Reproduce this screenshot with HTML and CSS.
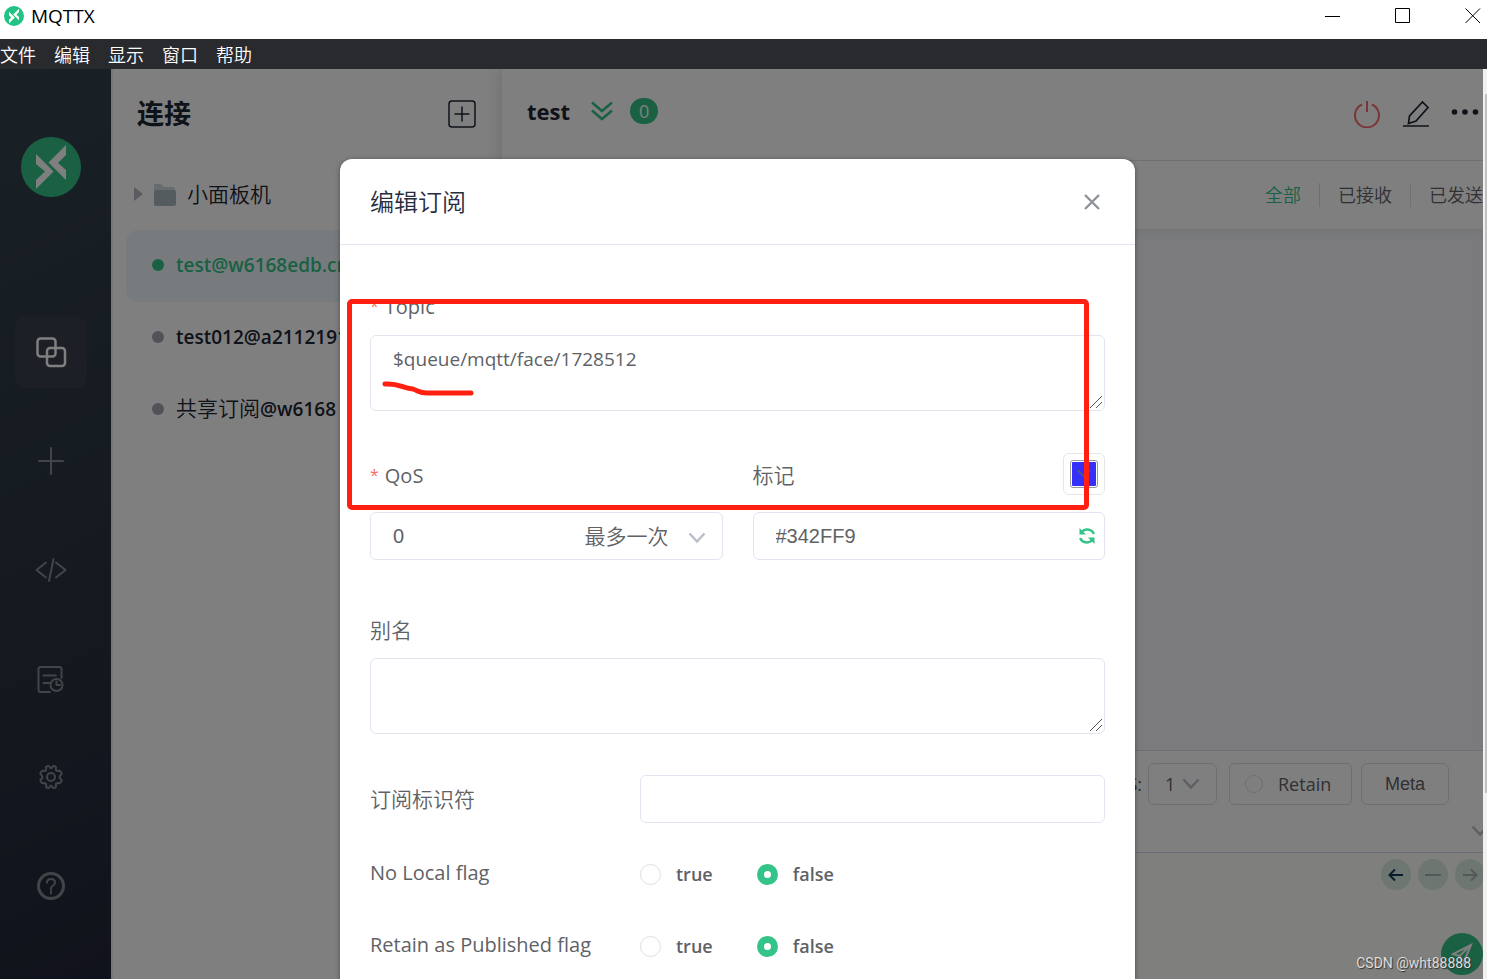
FILE: index.html
```
<!DOCTYPE html>
<html lang="zh-CN">
<head>
<meta charset="utf-8">
<title>MQTTX</title>
<link rel="stylesheet" href="styles.css">
</head>
<body>
<header class="titlebar">
  <svg class="titlebar-logo" viewBox="0 0 60 60" aria-hidden="true"><circle cx="30" cy="30" r="30" fill="#22c285"/><path d="M15 17 32.500 34.500 15 52V41L22 34.500 15 28ZM45 8V18L37 26 45 33V43L27.500 25.500Z" fill="#fff"/></svg>
  <h1 class="titlebar-name">MQTTX</h1>
  <div class="window-buttons">
    <button aria-label="Minimize"><svg width="16" height="16"><path d="M0 8.500H15" stroke="#000"/></svg></button>
    <button aria-label="Maximize"><svg width="16" height="16"><path d="M.5.5H14.500V14.500H.5Z" fill="none" stroke="#000"/></svg></button>
    <button aria-label="Close"><svg width="16" height="16"><path d="M.5.5 15 15M15 .5.5 15" stroke="#000"/></svg></button>
  </div>
</header>
<nav class="menubar">
  <button>文件</button><button>编辑</button><button>显示</button><button>窗口</button><button>帮助</button>
</nav>
<div class="stage">
  <div class="app">
    <nav class="sidebar">
      <svg class="logo" viewBox="0 0 60 60" aria-hidden="true"><circle cx="30" cy="30" r="30" fill="#34c388"/><path d="M15 17 32.500 34.500 15 52V43L24 34.500 15 27ZM45 8V18L37 26 45 33V43L27.500 25.500Z" fill="#fff"/></svg>
      <a href="#" class="side-item active" aria-label="Connections"><svg width="32" height="32" viewBox="0 0 32 32"><rect x="2.500" y="2.500" width="18" height="18" rx="3"/><rect x="12" y="12" width="18" height="18" rx="3"/></svg></a>
      <a href="#" class="side-item" aria-label="New"><svg width="32" height="32" viewBox="0 0 32 32"><path d="M16 3V29M4 16H28"/></svg></a>
      <a href="#" class="side-item" aria-label="Script"><svg width="32" height="32" viewBox="0 0 32 32"><path d="M11 8.500 1.500 16 11 23.500M21 8.500 30.500 16 21 23.500M18.500 5 14 27"/></svg></a>
      <a href="#" class="side-item" aria-label="Log"><svg width="32" height="32" viewBox="0 0 32 32"><path d="M15 29H5.500Q3.500 29 3.500 27V6Q3.500 4 5.500 4H24.500Q26.500 4 26.500 6V15M8.500 12.500H21M8.500 20H15"/><circle cx="21.500" cy="22" r="6"/><path d="M21.500 18.500V22H25"/></svg></a>
      <a href="#" class="side-item group-start" aria-label="Settings"><svg width="32" height="32" viewBox="0 0 32 32"><path d="M12.300 5.200Q14.200 4.400 15 6.500Q16 8 17 6.500Q17.800 4.400 19.700 5.200Q21.500 5.800 20.800 8Q20.800 10 22.800 10Q25 9.200 26 11Q27.500 13 25.300 14.300Q23.800 16 25.300 17.700Q27.500 19 26 21Q25 22.800 22.800 22Q20.800 22 20.800 24Q21.500 26.200 19.700 26.800Q17.800 27.600 17 25.500Q16 24 15 25.500Q14.200 27.600 12.300 26.800Q10.500 26.200 11.200 24Q11.200 22 9.200 22Q7 22.800 6 21Q4.500 19 6.700 17.700Q8.200 16 6.700 14.300Q4.500 13 6 11Q7 9.200 9.200 10Q11.200 10 11.200 8Q10.500 5.800 12.300 5.200Z"/><circle cx="16" cy="16" r="4"/></svg></a>
      <a href="#" class="side-item" aria-label="Help"><svg width="32" height="32" viewBox="0 0 32 32"><circle cx="16" cy="16" r="12.500" stroke-width="3"/><path d="M12 12.500Q12 9 16 9T20 12.500Q20 14.500 17.500 16Q16 17 16 19.500M16 21.500V23.500"/></svg></a>
    </nav>
    <aside class="connections">
      <div class="connections-head">
        <h2>连接</h2>
        <button aria-label="New connection"><svg width="28" height="28" viewBox="0 0 28 28" fill="none" stroke="#1d2433" stroke-width="1.500"><rect x="1" y="1" width="26" height="26" rx="3"/><path d="M14 6.500V21.500M6.500 14H21.500"/></svg></button>
      </div>
      <ul class="connection-list">
        <li class="folder"><svg width="9" height="14" viewBox="0 0 9 14"><path d="M0 0 9 7 0 14Z" fill="#b4b8c4"/></svg><svg width="23" height="23" viewBox="0 0 23 23"><path d="M1 1H8L11 4H20Q22 4 22 8H1Z" fill="#cfdadd"/><rect x="1" y="7" width="22" height="16" rx="2" fill="#a9b9be"/></svg><span class="folder-name">小面板机</span></li>
        <li><a href="#" class="connection selected">test@w6168edb.cn</a></li>
        <li><a href="#" class="connection">test012@a2112191</a></li>
        <li><a href="#" class="connection"><span><span class="cjk">共享订阅</span>@w6168</span></a></li>
      </ul>
    </aside>
    <main class="main">
      <div class="main-head">
        <h2>test</h2>
        <svg class="collapse" width="22" height="20" viewBox="0 0 22 20"><path d="M1 1.500 11 10 21 1.500M1 9.500 11 18 21 9.500"/></svg>
        <span class="count">0</span>
        <div class="actions">
          <button aria-label="Disconnect"><svg width="28" height="28" viewBox="0 0 28 28" fill="none" stroke="#f56c6c" stroke-width="2"><path d="M9 4.500A12 12 0 1 0 19 4.500M14 1V12"/></svg></button>
          <button aria-label="Edit"><svg width="28" height="28" viewBox="0 0 28 28" fill="none" stroke="#1d2433" stroke-width="1.700"><path d="M6.500 23.500 7.500 16 20.500 2 26 7.500 14 21ZM1 26H27"/></svg></button>
          <button aria-label="More"><svg width="28" height="28" viewBox="0 0 28 28" fill="#1d2433"><circle cx="3.500" cy="12" r="2.800"/><circle cx="14" cy="12" r="2.800"/><circle cx="24.500" cy="12" r="2.800"/></svg></button>
        </div>
      </div>
      <div class="filters"><button class="on">全部</button><button>已接收</button><button>已发送</button></div>
      <div class="messages"></div>
      <section class="publish">
        <div class="publish-row">
          <label for="pub-qos">QoS:</label>
          <span class="mini-select"><select id="pub-qos"><option>1</option></select><svg width="18" height="12" viewBox="0 0 18 12"><path d="M1.500 1.500 9 9.500 16.500 1.500"/></svg></span>
          <label class="retain"><input type="radio" name="retain">Retain</label>
          <button class="meta">Meta</button>
        </div>
        <div class="expand"><svg width="18" height="12" viewBox="0 0 18 12"><path d="M1.500 1.500 9 9.500 16.500 1.500"/></svg></div>
      </section>
      <section class="editor">
        <div class="history">
          <button aria-label="Previous"><svg width="16" height="16" viewBox="0 0 16 16" stroke="#123c58"><path d="M15 8H2M7 2.500 1.500 8 7 13.500"/></svg></button>
          <button aria-label="Clear"><svg width="16" height="16" viewBox="0 0 16 16" stroke="#a4b3b3"><path d="M0 8H16"/></svg></button>
          <button aria-label="Next"><svg width="16" height="16" viewBox="0 0 16 16" stroke="#a4b3b3"><path d="M1 8H14M9 2.500 14.500 8 9 13.500"/></svg></button>
        </div>
        <button class="send" aria-label="Send"><svg width="22" height="22" viewBox="0 0 22 22"><path d="M20 2 2 11 8.500 13 12.500 19.500ZM8.500 13 20 2"/></svg></button>
      </section>
    </main>
    <div class="overlay">
      <section class="dialog" role="dialog" aria-labelledby="dlg-title">
        <header class="dialog-head">
          <h2 id="dlg-title">编辑订阅</h2>
          <button aria-label="Close dialog"><svg width="18" height="18" viewBox="0 0 18 18"><path d="M2 2 16 16M16 2 2 16" stroke="#8f9399" stroke-width="2.400"/></svg></button>
        </header>
        <form class="form">
          <label class="required" for="topic">Topic</label>
          <div class="area-wrap"><textarea id="topic" class="area">$queue/mqtt/face/1728512</textarea><svg class="grip" width="12" height="12" viewBox="0 0 12 12"><path d="M0 12 12 0M6 12 12 6"/></svg></div>
          <div class="columns">
            <div class="column">
              <div class="label-row"><label class="required" for="qos">QoS</label></div>
              <div class="field"><select id="qos" class="box"><option>0</option></select><span class="field-end cjk">最多一次<svg width="18" height="12" viewBox="0 0 18 12"><path d="M1.500 1.500 9 9.500 16.500 1.500"/></svg></span></div>
            </div>
            <div class="column">
              <div class="label-row"><label class="cjk" for="mark">标记</label>
                <button type="button" class="picker" aria-label="Pick colour"><span class="swatch"><svg width="14" height="10" viewBox="0 0 14 10"><path d="M1 1.500 7 7.500 13 1.500"/></svg></span></button></div>
              <div class="field"><input id="mark" class="box" type="text" value="#342FF9"><span class="field-end refresh"><svg width="18" height="18" viewBox="0 0 18 18"><path d="M3 6.500A7 7 0 0 1 15.800 7M15 11.500A7 7 0 0 1 2.200 11"/><path class="solid" d="M1.500 1V7.500H8ZM16.500 17V10.500H10Z"/></svg></span></div>
            </div>
          </div>
          <label class="alias cjk" for="alias">别名</label>
          <div class="area-wrap"><textarea id="alias" class="area"></textarea><svg class="grip" width="12" height="12" viewBox="0 0 12 12"><path d="M0 12 12 0M6 12 12 6"/></svg></div>
          <div class="inline-row"><label class="cjk" for="subid">订阅标识符</label><input id="subid" class="box" type="text"></div>
          <fieldset class="flag"><legend>No Local flag</legend>
            <label><input type="radio" name="nl">true</label><label><input type="radio" name="nl" checked>false</label></fieldset>
          <fieldset class="flag"><legend>Retain as Published flag</legend>
            <label><input type="radio" name="rap">true</label><label><input type="radio" name="rap" checked>false</label></fieldset>
        </form>
        <div class="highlight"><svg width="94" height="18" viewBox="0 0 94 18"><path d="M3 4C18 3 19 8 31 9C37 11 37 13 45 13H89"/></svg></div>
      </section>
    </div>
    <span class="watermark">CSDN @wht88888</span>
  </div>
  <div class="scrollbar"><div class="thumb"></div></div>
</div>
</body>
</html>
```
FILE: styles.css
```
* { box-sizing: border-box; }
body {
  margin: 0;
  height: 100vh;
  display: flex;
  flex-direction: column;
  overflow: hidden;
  background: #fff;
  color: #606266;
  font: 20px/28px "Open Sans", "Noto Sans CJK SC", sans-serif;
}
button, input, select, textarea { font: inherit; color: inherit; margin: 0; }
button { border: 0; padding: 0; background: none; }
h1, h2, ul, fieldset, legend { margin: 0; padding: 0; border: 0; }
a { color: inherit; text-decoration: none; }
svg { display: block; flex: none; }
.cjk { font-size: 21px; font-weight: 350; }

.titlebar { flex: none; height: 39px; display: flex; align-items: center; padding: 0 7px 7px 4px; color: #000; }
.titlebar-logo { width: 20px; height: 20px; }
.titlebar-name { margin-left: 7px; font-size: 19px; font-weight: 400; }
.window-buttons { margin-left: auto; display: flex; gap: 54px; }
.window-buttons button:last-child { margin-right: -1px; }
.menubar { flex: none; height: 30px; padding-top: 2px; display: flex; align-items: center; gap: 18px; background: #292a2e; color: #fff; font-size: 18px; font-weight: 350; }

.stage { flex: 1; min-height: 0; display: flex; }
.app { position: relative; flex: 1; min-width: 0; display: flex; overflow: hidden; }
.scrollbar { flex: none; width: 4px; padding: 25px 0 0 2px; background: #f1f1f1; }
.thumb { height: 79%; background: #c1c1c1; }

.sidebar {
  flex: none; width: 111px; padding: 68px 9px 0 0;
  display: flex; flex-direction: column; align-items: center; gap: 37px;
  background: linear-gradient(155deg, #34424c 0%, #2a3641 50%, #232638 100%);
}
.logo { width: 60px; height: 60px; margin-bottom: 82px; }
.side-item { flex: none; width: 72px; height: 72px; border-radius: 12px; display: flex; align-items: center; justify-content: center; color: #858b90; }
.side-item svg { fill: none; stroke: currentColor; stroke-width: 2; stroke-linecap: round; stroke-linejoin: round; }
.side-item.active { background: #3b3f4c; color: #fff; }
.side-item.active svg { stroke-width: 2.500; }
.group-start { margin-top: -11px; }

.connections { flex: none; width: 391px; border-left: 2px solid #ececf4; background: #fff; color: #1d2433; }
.connections-head { height: 89px; padding: 0 26px 0 24px; display: flex; align-items: center; justify-content: space-between; }
.connections-head h2 { font-size: 27px; line-height: 36px; }
.connection-list { list-style: none; padding: 0 13px; }
.folder { height: 72px; padding-left: 8px; display: flex; align-items: center; }
.folder svg + svg { margin-left: 10px; }
.folder-name { margin-left: 11px; font-size: 21px; font-weight: 350; }
.connection { height: 72px; padding: 0 0 3px 26px; border-radius: 12px; display: flex; align-items: center; gap: 12px; font-size: 19px; font-weight: 600; white-space: nowrap; }
.connection::before { content: ""; width: 12px; height: 12px; border-radius: 50%; background: #a0a4b0; }
.connection.selected { background: #eff7fb; color: #34c388; }
.connection.selected::before { background: #34c388; }

.main { flex: 1; min-width: 0; display: flex; flex-direction: column; background: #fff; box-shadow: -2px 0 16px #dadfe8; }
.main-head { flex: none; height: 92px; padding: 0 4px 8px 25px; display: flex; align-items: center; border-bottom: 1px solid #dddde9; }
.main-head h2 { font-size: 22px; color: #1d2433; }
.collapse { margin-left: 21px; fill: none; stroke: #34c388; stroke-width: 2.500; }
.count { margin-left: 17px; width: 28px; height: 26px; border-radius: 13px; background: #34c388; color: #fff; font-size: 18px; line-height: 27px; text-align: center; }
.actions { margin-left: auto; display: flex; gap: 21px; padding-top: 6px; }
.filters { flex: none; height: 69px; display: flex; align-items: center; justify-content: flex-end; border-bottom: 1px solid #ececf4; font-size: 18px; font-weight: 350; }
.filters button { height: 24px; line-height: 24px; padding: 0 18px; border-left: 1px solid #dddde9; }
.filters button:first-child { border: 0; }
.filters button:last-child { padding-right: 0; }
.filters .on { color: #34c388; }
.messages { flex: 1; background: #f6f7fb; box-shadow: inset 0 6px 8px #eeeff4; }
.publish { flex: none; height: 103px; border-top: 1px solid #dddde9; border-bottom: 1px solid #d6d6e8; font-size: 18px; }
.publish-row { height: 66px; padding-right: 34px; display: flex; align-items: center; justify-content: flex-end; }
.mini-select { position: relative; margin: 0 12px 0 6px; }
.mini-select select { appearance: none; width: 69px; height: 42px; padding: 0 16px; border: 1px solid #dddde9; border-radius: 6px; background: none; }
.mini-select svg { position: absolute; right: 17px; top: 15px; }
.mini-select svg, .expand svg, .field-end svg { fill: none; stroke: #b9bec9; stroke-width: 2.500; }
.retain { width: 123px; height: 42px; margin-right: 9px; padding-left: 15px; border: 1px solid #dddde9; border-radius: 5px; display: flex; align-items: center; gap: 15px; }
.meta { width: 88px; height: 42px; border: 1px solid #dddde9; border-radius: 6px; font-family: "Liberation Sans", sans-serif; }
.expand { padding-top: 8px; display: flex; justify-content: flex-end; margin-right: -6px; }
.editor { flex: none; height: 126px; padding: 6px 0 0; background: #fffffa; display: flex; flex-direction: column; align-items: flex-end; gap: 43px; }
.history { display: flex; gap: 7px; margin-right: -2px; }
.history button { width: 30px; height: 31px; border-radius: 50%; background: #dcede5; display: flex; align-items: center; justify-content: center; }
.history svg { fill: none; stroke-width: 2; }
.send { width: 42px; height: 42px; border-radius: 50%; background: #34c388; display: flex; align-items: center; justify-content: center; }
.send svg { fill: none; stroke: #fff; stroke-width: 2; }

input[type="radio"] { appearance: none; flex: none; width: 21px; height: 21px; border: 1px solid #dcdfe6; border-radius: 50%; background: #fff; }
input[type="radio"]:checked { border: 7px solid #34c388; }
.retain input[type="radio"] { width: 18px; height: 18px; }

.overlay { position: absolute; inset: 0; padding: 90px 8px 0 0; display: flex; justify-content: center; align-items: flex-start; background: rgba(0, 0, 0, 0.5); }
.dialog { position: relative; width: 795px; max-width: 100%; border-radius: 12px; background: #fff; box-shadow: 0 1px 5px rgba(0, 0, 0, 0.4); }
.dialog-head { height: 86px; padding: 0 34px 0 30px; display: flex; align-items: center; justify-content: space-between; border-bottom: 1px solid #e4e4f0; }
.dialog-head h2 { font-size: 24px; font-weight: 350; color: #262d3f; }
.form { padding: 47px 30px 36px; display: flex; flex-direction: column; }
.required::before { content: "*"; margin-right: 6px; color: #f56c6c; font-size: 16px; vertical-align: 2px; }
.box, .area { width: 100%; border: 1px solid #e4e4f0; border-radius: 6px; background: #fff; outline: 0; }
.area-wrap { position: relative; margin-top: 14px; }
.area { display: block; height: 76px; padding: 9px 22px; resize: none; font-size: 19px; line-height: 28px; }
.grip { position: absolute; right: 3px; bottom: 3px; stroke: #555; }
.box { appearance: none; display: block; height: 48px; padding: 0 22px; font-family: "Liberation Sans", sans-serif; }
.columns { display: grid; grid-template-columns: 1fr 1fr; gap: 30px; margin-top: 42px; }
.label-row { height: 42px; margin-bottom: 17px; display: flex; align-items: center; justify-content: space-between; }
.label-row label { padding-top: 2px; }
.picker { width: 42px; height: 42px; padding: 6px; border: 1px solid #e6e6e6; border-radius: 6px; }
.swatch { width: 28px; height: 28px; border: 1px solid #999; border-radius: 3px; padding: 1px; background: #342ff9 content-box; display: flex; align-items: center; justify-content: center; }
.swatch svg { fill: none; stroke: #606266; stroke-width: 1.500; }
.field { position: relative; }
.field-end { position: absolute; right: 17px; top: 0; height: 48px; display: flex; align-items: center; gap: 19px; pointer-events: none; }
.field-end.cjk svg { margin-top: 4px; }
.refresh { right: 9px; }
.refresh svg { stroke: #34c388; }
.refresh .solid { fill: #34c388; stroke: none; }
.alias { margin-top: 56px; }
.inline-row { margin: 41px 0 14px; display: grid; grid-template-columns: 270px 1fr; align-items: center; }
.flag { height: 72px; padding-top: 22px; display: flex; align-items: center; }
.flag legend { float: left; width: 270px; padding-bottom: 2px; }
.flag label { display: flex; align-items: center; gap: 15px; margin-right: 44px; font-size: 18px; font-weight: 600; }
.highlight { position: absolute; left: 7px; top: 140px; width: 742px; height: 211px; border: 5px solid #ff2012; border-radius: 5px; pointer-events: none; }
.highlight svg { margin: 76px 0 0 30px; fill: none; stroke: #ff2012; stroke-width: 5; stroke-linecap: round; }
.watermark { position: absolute; right: 12px; bottom: 6px; color: #ddd; font: 14px/20px Roboto, sans-serif; text-shadow: 1px 1px 1px #333; }
```
